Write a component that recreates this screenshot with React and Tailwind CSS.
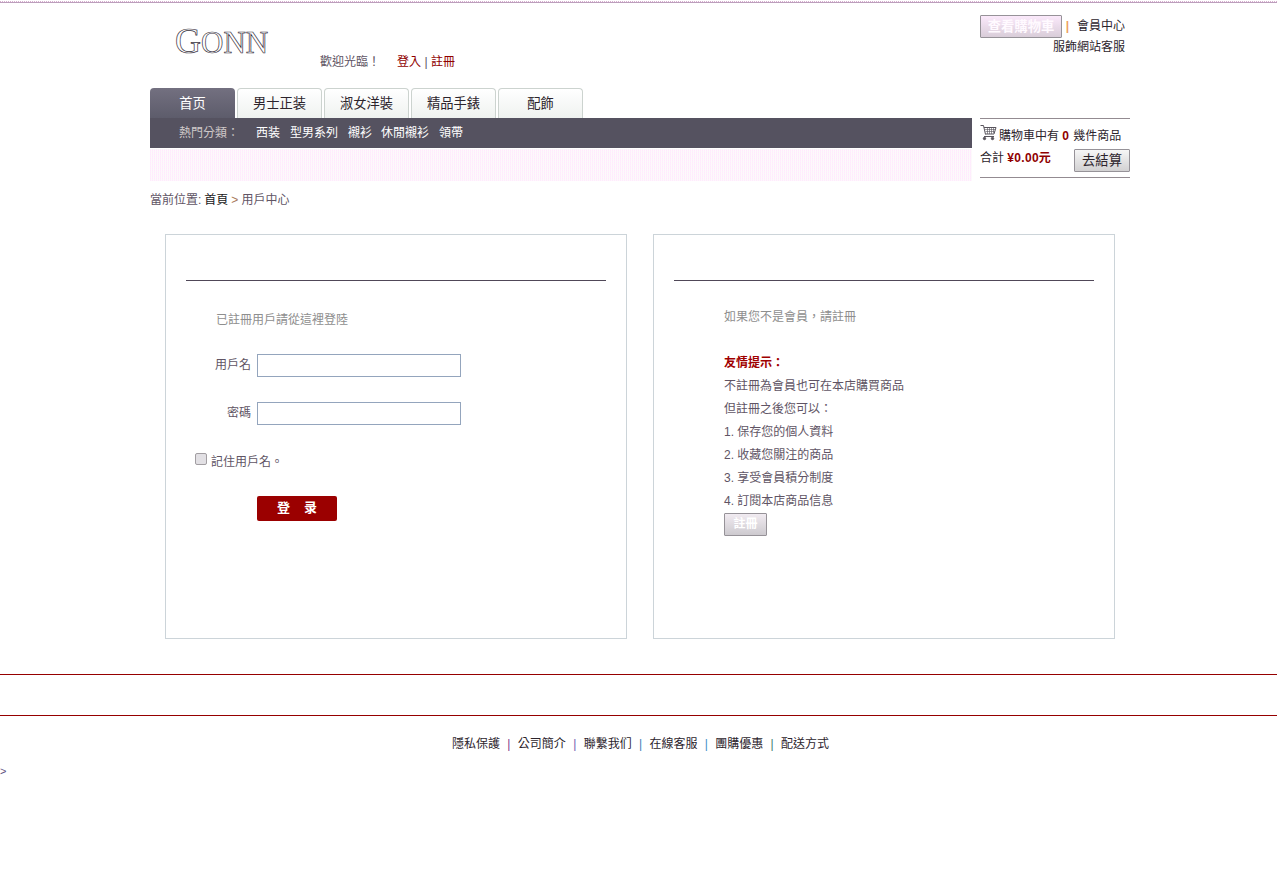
const tabs = ["首页", "男士正装", "淑女洋裝", "精品手錶", "配飾"];
const categories = [["西装", "w-[34px]"], ["型男系列", "w-[58px]"], ["襯衫", "w-[33px]"], ["休閒襯衫", "w-[58px]"], ["領帶", "w-[34px]"]];
const footerLinks = ["隱私保護", "公司簡介", "聯繫我们", "在線客服", "團購優惠", "配送方式"];
const separatorColors = ["", "text-[#80408a]", "text-[#7060b0]", "text-[#4080b8]", "text-[#4090c8]", "text-[#408070]"];
const tips = ["不註冊為會員也可在本店購買商品", "但註冊之後您可以：", "1. 保存您的個人資料", "2. 收藏您關注的商品", "3. 享受會員積分制度", "4. 訂閱本店商品信息"];

function CartIcon() {
  return (
    <svg width="17" height="17" viewBox="0 0 17 17" fill="none" stroke="#58545c" className="shrink-0">
      <path d="M0.5 1.5h3l2 9M4 3.5h12l-2 6.5H5.5M4 12.5h10" />
      <path d="M5 5.5h10M5.5 7.5h9M7.500 4v6M9.500 4v6M11.500 4v6M13.500 4v5" strokeWidth=".6" />
      <circle cx="4.500" cy="14.500" r="1.200" fill="#58545c" />
      <circle cx="12.500" cy="14.500" r="1.200" fill="#58545c" />
    </svg>
  );
}

function GrayButton({ children, className }) {
  return (
    <button className={`flex items-center justify-center whitespace-nowrap rounded-[1px] border border-[#969298] bg-linear-to-b p-0 ${className}`}>
      {children}
    </button>
  );
}

function Header() {
  return (
    <header className="flex h-[85px] justify-between pr-[5px]">
      <div className="flex">
        <h1 className="ml-[25px] mt-[19px] h-[38px] w-[145px] whitespace-nowrap font-['Liberation_Serif',serif] text-[36px] leading-[38px] text-white [-webkit-text-stroke:0.7px_#38323e]">
          G<span className="text-[31px]">ONN</span>
        </h1>
        <div className="mt-[49px] flex h-5 items-center text-[#605464]">
          <span className="w-[77px]">歡迎光臨！</span>
          <a className="text-[#900000]">登入</a>
          <span className="w-[10px] text-center">|</span>
          <a className="text-[#900000]">註冊</a>
        </div>
      </div>
      <div className="mt-3 w-[145px] text-[#2c242c]">
        <div className="flex h-[23px] justify-between leading-[22px]">
          <GrayButton className="h-[23px] w-[82px] from-[#fbe9fb] to-[#d9cdd9] text-[13.3px] font-bold text-[#fffaff]">查看購物車</GrayButton>
          <span className="mr-[4px] font-bold text-[#eca060]">|</span>
          <a>會員中心</a>
        </div>
        <div className="h-[18px] text-right leading-[18px]">服飾網站客服</div>
      </div>
    </header>
  );
}

function Navigation() {
  return (
    <div className="flex justify-between">
      <nav className="w-[822px]">
        <div className="flex gap-[2px]">
          {tabs.map((tab, i) => (
            <a
              key={tab}
              className={`flex h-[30px] w-[85px] items-center justify-center rounded-t-[4px] text-[13.3px] ${
                i === 0 ? "bg-linear-to-b from-[#737080] to-[#5d5c6b] pt-px text-white" : "border border-b-0 border-[#ccd3cf] bg-linear-to-b from-white to-[#eff2f0] text-[#2c242c]"
              }`}
            >
              {tab}
            </a>
          ))}
        </div>
        <div className="flex h-[30px] items-center bg-[#555260] pl-[29px] text-white">
          <span className="w-[77px] text-[#cec8c8]">熱門分類：</span>
          {categories.map(([name, width]) => (
            <a key={name} className={`${width} whitespace-nowrap`}>{name}</a>
          ))}
        </div>
        <div className="mt-[1px] h-8 bg-[#fffaff] bg-[repeating-linear-gradient(90deg,#ffd8ff60_0_1px,transparent_1px_2px),repeating-linear-gradient(180deg,#f2fff050_0_1px,#fff0f850_1px_2px)]" />
      </nav>
      <aside className="mt-[30px] h-[60px] w-[150px] border-y border-[#938b91] text-[#2c242c]">
        <div className="flex h-[30px] items-center">
          <div className="mr-[2px] mb-1"><CartIcon /></div>
          <span className="whitespace-nowrap pt-1">購物車中有 <b className="mr-px text-[#900000]">0</b> 幾件商品</span>
        </div>
        <div className="flex h-[23px] items-center justify-between">
          <span className="pb-[5px]">合計 <b className="tracking-[0.3px] text-[#900000]">¥0.00元</b></span>
          <GrayButton className="h-[23px] w-14 from-[#f6f6f6] to-[#d2d1d2] text-[13.3px]">去結算</GrayButton>
        </div>
      </aside>
    </div>
  );
}

function Field({ label, type }) {
  return (
    <label className="flex h-[23px] items-center">
      <span className="mr-[6px] w-[65px] pb-[2px] text-right">{label}</span>
      <input type={type} className="h-[23px] w-[204px] border border-[#94a5bd] bg-white px-1 outline-none" />
    </label>
  );
}

function LoginPanel() {
  return (
    <section className="h-[405px] w-[462px] border border-[#ccd4d9] px-5">
      <div className="h-[46px] border-b border-[#504858]" />
      <p className="mt-[29px] ml-[30px] h-5 leading-5 text-[#8e8e8e]">已註冊用戶請從這裡登陸</p>
      <form className="mt-[24px]">
        <Field label="用戶名" type="text" />
        <div className="h-[25px]" />
        <Field label="密碼" type="password" />
        <label className="mt-[27px] ml-[9px] flex h-5 items-center gap-[4px]">
          <input type="checkbox" className="mb-[6px] h-3 w-3 appearance-none rounded-[2px] border border-[#a29ea2] bg-[#e2e0e4]" />
          記住用戶名。
        </label>
        <button type="button" className="mt-[24px] ml-[71px] flex h-[25px] w-20 items-center justify-center gap-[14px] rounded-[2px] bg-[#9b0000] pb-px text-[13px] font-bold text-white">
          <span>登</span><span>录</span>
        </button>
      </form>
    </section>
  );
}

function RegisterPanel() {
  return (
    <section className="h-[405px] w-[462px] border border-[#ccd4d9] px-5">
      <div className="h-[46px] border-b border-[#504858]" />
      <div className="ml-[50px] mt-[25px] leading-[23px]">
        <p className="text-[#8e8e8e]">如果您不是會員，請註冊</p>
        <p className="mt-[23px] font-bold text-[#a00000]">友情提示：</p>
        {tips.map((tip) => <p key={tip}>{tip}</p>)}
        <GrayButton className="h-[23px] w-[43px] from-[#f1ebf1] to-[#cdcacf] font-bold text-white">註冊</GrayButton>
      </div>
    </section>
  );
}

export default function App() {
  return (
    <div className="min-h-[890px] w-[1277px] overflow-hidden bg-white font-['Liberation_Sans','Noto_Sans_CJK_TC',sans-serif] text-[12px] leading-normal text-[#605464]">
      <div className="mt-[1px] h-[2px] border-b border-[#bc9ebc] bg-[repeating-linear-gradient(90deg,#d8b0d0_0_1px,#fff_1px_2px)]" />
      <div className="ml-[150px] w-[980px]">
        <Header />
        <Navigation />
        <div className="mt-[9px] flex h-5 items-center">
          當前位置:<a className="ml-[3px] text-[#201820]">首頁</a>
          <span className="mx-[3px] text-[#a87858]">&gt;</span>用戶中心
        </div>
        <main className="mt-[24px] ml-[15px] flex gap-[26px]">
          <LoginPanel />
          <RegisterPanel />
        </main>
      </div>
      <footer className="mt-[35px]">
        <div className="h-[42px] border-y border-[#960000]" />
        <nav className="mt-[18px] ml-[452px] flex h-5 items-center text-[#2c242c]">
          {footerLinks.map((link, i) => (
            <span key={link} className="flex">
              {i > 0 && <span className={`w-[17.8px] text-center ${separatorColors[i]}`}>|</span>}
              <a>{link}</a>
            </span>
          ))}
        </nav>
        <div className="mt-[9px] h-4 text-[11px] leading-4 text-[#605080]">&gt;</div>
      </footer>
    </div>
  );
}
